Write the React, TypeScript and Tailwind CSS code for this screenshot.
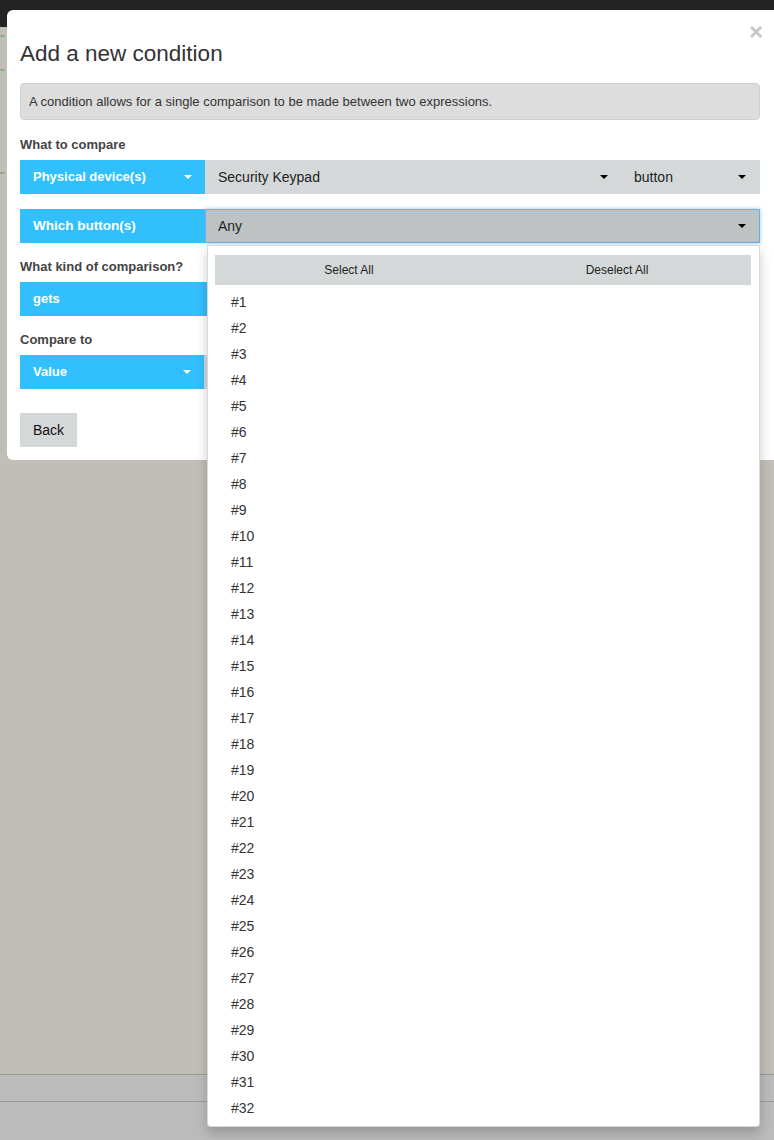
import React from 'react';

const BLUE = 'bg-[#31c0fd]';

const Caret = ({ color = 'border-t-white' }: { color?: string }) => (
  <span className={`inline-block w-0 h-0 border-x-[4px] border-x-transparent border-t-[4px] ${color}`} />
);

const Label = ({ children }: { children: React.ReactNode }) => (
  <div className="text-[13px] leading-[18px] font-bold text-[#444]">{children}</div>
);

const items = Array.from({ length: 32 }, (_, i) => `#${i + 1}`);

export default function App() {
  return (
    <div
      className="relative w-[774px] h-[1140px] overflow-hidden bg-[#c1beb7]"
      style={{ fontFamily: '"Liberation Sans", Arial, sans-serif' }}
    >
      {/* page behind the modal */}
      <div className="h-[27px] bg-[#232323]" />
      <div className="absolute left-0 top-[34px] text-[6px] leading-none text-[#3a9a2a]">**</div>
      <div className="absolute left-0 top-[68px] text-[6px] leading-none text-[#3a9a2a]">**</div>
      <div className="absolute left-0 top-[171px] text-[6px] leading-none text-[#3a9a2a]">**</div>
      <div className="absolute left-0 right-0 top-[1074px] bottom-0 bg-[#bbbbbb] border-t border-[#9a9a9a]">
        <div className="h-[27px] border-b border-[#9a9a9a]" />
      </div>

      {/* modal */}
      <div className="absolute left-[7px] top-[10px] w-[790px] bg-white rounded-l-[6px] pl-[13px] pr-[37px] pt-[30px] pb-[13px]">
        <button className="absolute left-[742px] top-[10px] text-[24px] leading-[24px] font-bold text-[#c6c6c6]">×</button>
        <div className="text-[22.5px] leading-[28px] text-[#333]">Add a new condition</div>

        <div className="mt-[15px] h-[37px] flex items-center px-[8px] bg-[#dddddd] border border-[#cfcfcf] rounded-[4px] text-[13px] text-[#333]">
          A condition allows for a single comparison to be made between two expressions.
        </div>

        <div className="mt-[16px]">
          <Label>What to compare</Label>
        </div>
        <div className="mt-[6px] flex h-[34px]">
          <div className={`w-[185px] ${BLUE} flex items-center justify-between pl-[13px] pr-[13px] text-white text-[13px] font-bold`}>
            <span>Physical device(s)</span>
            <Caret />
          </div>
          <div className="flex-1 bg-[#d5d8d9] flex items-center justify-between pl-[13px] pr-[14px] text-[14px] text-[#222]">
            <span>Security Keypad</span>
            <Caret color="border-t-black" />
          </div>
          <div className="w-[138px] bg-[#d5d8d9] flex items-center justify-between pl-[12px] pr-[14px] text-[14px] text-[#222]">
            <span>button</span>
            <Caret color="border-t-black" />
          </div>
        </div>

        <div className="mt-[15px] flex h-[34px]">
          <div className={`w-[185px] ${BLUE} flex items-center pl-[13px] text-white text-[13.5px] font-bold`}>
            Which button(s)
          </div>
          <div className="flex-1 bg-[#bfc2c3] border border-[#66afe9] shadow-[0_0_4px_rgba(102,175,233,0.7)] flex items-center justify-between pl-[12px] pr-[13px] text-[14px] text-[#222]">
            <span>Any</span>
            <Caret color="border-t-black" />
          </div>
        </div>

        <div className="mt-[15px]">
          <Label>What kind of comparison?</Label>
        </div>
        <div className={`mt-[6px] h-[34px] ${BLUE} flex items-center pl-[13px] text-white text-[13px] font-bold`}>
          gets
        </div>

        <div className="mt-[15px]">
          <Label>Compare to</Label>
        </div>
        <div className="mt-[6px] flex h-[34px]">
          <div className={`w-[184px] ${BLUE} flex items-center justify-between pl-[13px] pr-[13px] text-white text-[13px] font-bold`}>
            <span>Value</span>
            <Caret />
          </div>
          <div className="flex-1 bg-[#d5d8d9]" />
        </div>

        <div className="mt-[24px] flex justify-between h-[34px]">
          <button className="w-[57px] bg-[#d5d8d9] text-[14px] text-[#111]">Back</button>
          <button className={`w-[70px] ${BLUE} text-[14px] text-white`}>Save</button>
        </div>
      </div>

      {/* open dropdown */}
      <div className="absolute left-[207px] top-[245px] w-[553px] bg-white border border-[rgba(0,0,0,0.15)] rounded-b-[4px] shadow-[0_6px_12px_rgba(0,0,0,0.2)] pt-[9px] pl-[7px] pr-[8px] pb-[5px]">
        <div className="flex h-[30px] bg-[#d5d8d9] text-[12px] text-[#222]">
          <button className="flex-1">Select All</button>
          <button className="flex-1">Deselect All</button>
        </div>
        <ul className="mt-[4px]">
          {items.map((it) => (
            <li key={it} className="h-[26px] leading-[26px] pl-[16px] text-[14px] text-[#333]">
              {it}
            </li>
          ))}
        </ul>
      </div>
    </div>
  );
}
